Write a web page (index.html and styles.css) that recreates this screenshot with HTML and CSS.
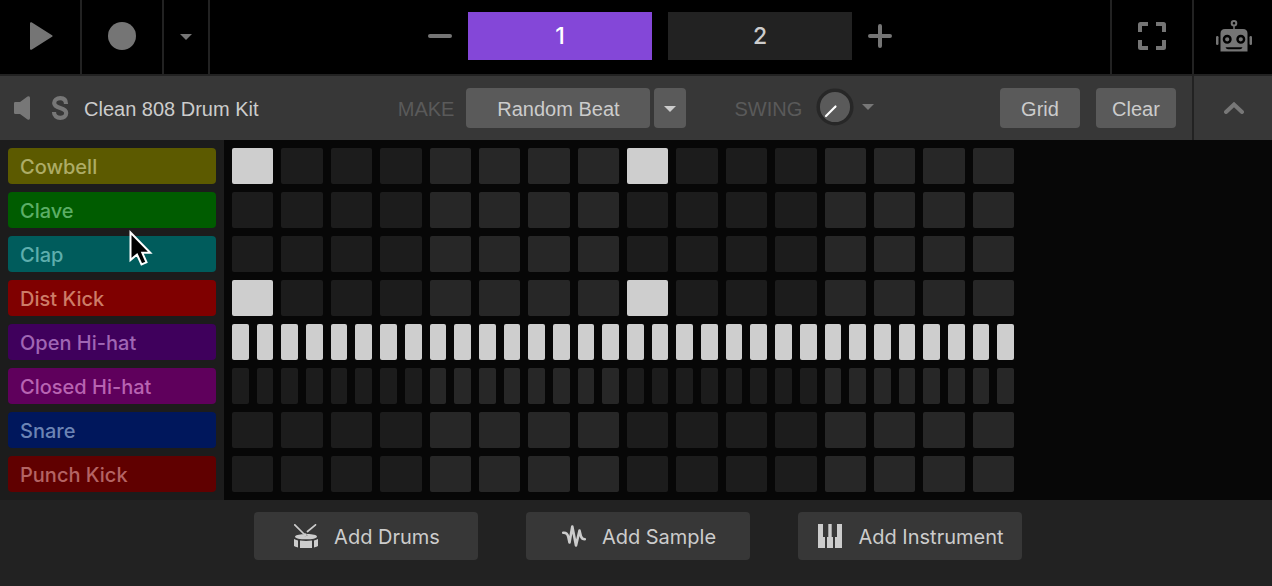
FILE: index.html
```html
<!DOCTYPE html>
<html lang="en">
<head>
<meta charset="utf-8">
<meta name="viewport" content="width=device-width, initial-scale=1">
<title>Beat sequencer</title>
<link rel="stylesheet" href="styles.css">
</head>
<body>
<div class="app">
  <header class="transport">
    <button class="cell" type="button" aria-label="Play">
      <svg width="28" height="28" viewBox="0 0 28 28"><path d="M5 1.200 25.500 14 5 26.800Z" fill="currentColor" stroke="currentColor" stroke-width="2" stroke-linejoin="round"/></svg>
    </button>
    <button class="cell" type="button" aria-label="Record">
      <svg width="28" height="28" viewBox="0 0 28 28"><circle cx="14" cy="14" r="14" fill="currentColor"/></svg>
    </button>
    <button class="cell cell-narrow" type="button" aria-label="Record options">
      <svg width="12" height="8" viewBox="0 0 12 8"><path d="M0 2h12L6 8Z" fill="currentColor"/></svg>
    </button>
    <nav class="patterns" aria-label="Patterns">
      <button class="icon-button" type="button" aria-label="Remove pattern">
        <svg width="24" height="24" viewBox="0 0 24 24"><path d="M2 12h20" stroke="currentColor" stroke-width="4" stroke-linecap="round"/></svg>
      </button>
      <button class="pattern pattern-active" type="button">1</button>
      <button class="pattern" type="button">2</button>
      <button class="icon-button" type="button" aria-label="Add pattern">
        <svg width="24" height="24" viewBox="0 0 24 24"><path d="M2 12h20M12 2v20" stroke="currentColor" stroke-width="4" stroke-linecap="round"/></svg>
      </button>
    </nav>
    <button class="cell cell-right" type="button" aria-label="Full screen">
      <svg width="28" height="28" viewBox="0 0 28 28"><path d="M2 10V2.500Q2 2 2.500 2H10M18 2h7.500q.5 0 .5.5V10M26 18v7.500q0 .5-.5.5H18M10 26H2.500Q2 26 2 25.500V18" fill="none" stroke="currentColor" stroke-width="4"/></svg>
    </button>
    <button class="cell cell-right" type="button" aria-label="Assistant">
      <svg width="36" height="32" viewBox="0 0 36 32">
        <circle cx="18" cy="3.300" r="2.300" fill="none" stroke="currentColor" stroke-width="2"/>
        <path d="M18 5.500V10" stroke="currentColor" stroke-width="1.500"/>
        <path fill="currentColor" fill-rule="evenodd" d="M9 9h18q4.500 0 4.500 4.500V31.500h-27V13.500Q4.500 9 9 9ZM9.500 27.200q.7 2.100 2.500 2.100h12q1.800 0 2.500-2.100Z"/>
        <rect x="0" y="16" width="2.500" height="9" rx="1.200" fill="currentColor"/>
        <rect x="33.500" y="16" width="2.500" height="9" rx="1.200" fill="currentColor"/>
        <g fill="none" stroke="#000" stroke-width="2.400"><circle cx="11.200" cy="19.300" r="3.300"/><circle cx="24.800" cy="19.300" r="3.300"/></g>
      </svg>
    </button>
  </header>

  <section class="toolbar" aria-label="Track controls">
    <div class="track-head">
      <button class="head-button" type="button" aria-label="Mute">
        <svg width="16" height="24" viewBox="0 0 16 24"><path d="M1.200 6H6L13.500.6Q16-.6 16 2v20q0 2.600-2.500 1.400L6 18H1.200Q0 18 0 16.800V7.200Q0 6 1.200 6Z" fill="currentColor"/></svg>
      </button>
      <button class="head-button" type="button" aria-label="Solo">
        <svg width="20" height="24" viewBox="0 0 20 24"><path d="M16 8C16 4 14 2.200 10.300 2.200S4.200 4.200 4.200 7c0 6.500 12 3.500 12 10 0 3-2.400 4.800-5.900 4.800S4 20 4 16" fill="none" stroke="currentColor" stroke-width="4.200"/></svg>
      </button>
      <span class="track-title">Clean 808 Drum Kit</span>
    </div>
    <div class="make">
      <span class="caption">MAKE</span>
      <button class="button make-button" type="button">Random Beat</button>
      <button class="button more-button" type="button" aria-label="More beats">
        <svg width="12" height="8" viewBox="0 0 12 8"><path d="M0 2h12L6 8Z" fill="currentColor"/></svg>
      </button>
      <label class="caption swing-label" for="swing">SWING</label>
      <span class="knob">
        <svg width="38" height="38" viewBox="0 0 38 38"><circle cx="19" cy="19" r="16.800" fill="#5a5a5a" stroke="#272727" stroke-width="3.500"/><path d="M19.500 18.500 10 28" stroke="#fff" stroke-width="2.200" stroke-linecap="round"/></svg>
        <input class="knob-input" id="swing" type="range" min="0" max="100" value="0">
      </span>
      <button class="head-button swing-more" type="button" aria-label="Swing options">
        <svg width="12" height="6" viewBox="0 0 12 6"><path d="M0 0h12L6 6Z" fill="currentColor"/></svg>
      </button>
    </div>
    <div class="actions">
      <button class="button action" type="button">Grid</button>
      <button class="button action" type="button">Clear</button>
      <button class="collapse" type="button" aria-label="Collapse track">
        <svg width="20" height="12" viewBox="0 0 20 12"><path d="M2 10 10 2.500 18 10" fill="none" stroke="currentColor" stroke-width="4" stroke-linecap="round"/></svg>
      </button>
    </div>
  </section>

  <main class="sequencer">
    <div class="instruments">
      <button class="instrument cowbell" type="button">Cowbell</button>
      <button class="instrument clave" type="button">Clave</button>
      <button class="instrument clap" type="button">Clap</button>
      <button class="instrument dist-kick" type="button">Dist Kick</button>
      <button class="instrument open-hat" type="button">Open Hi-hat</button>
      <button class="instrument closed-hat" type="button">Closed Hi-hat</button>
      <button class="instrument snare" type="button">Snare</button>
      <button class="instrument punch-kick" type="button">Punch Kick</button>
    </div>
    <div class="lanes" id="lanes"></div>
  </main>

  <footer class="add-bar">
    <button class="button add" type="button">
      <svg width="24" height="24" viewBox="0 0 24 24">
        <path d="M.8.800 11 11M21.500.800 13.500 7.500" stroke="currentColor" stroke-width="1.700" stroke-linecap="round"/>
        <circle cx="11.200" cy="11" r="1.700" fill="currentColor"/>
        <path d="M9.500 10.200 11 12.500 13.500 11.500 12.500 10.100C18 10 23 11 23 12.700S18 15.300 12 15.300 1 14.400 1 12.700 5 10.300 9.500 10.200Z" fill="currentColor"/>
        <path d="M0 15q1.500 1 4 1.400v7Q1 23 0 22ZM24 15q-1.500 1-4 1.400v7q3-.4 4-1.400ZM6 16.600q6 .8 12 0V24H6Z" fill="currentColor"/>
      </svg>
      <span class="add-text">Add Drums</span>
    </button>
    <button class="button add" type="button">
      <svg width="24" height="24" viewBox="0 0 24 24"><path d="M1.200 8.800C4 8.500 5.500 9.500 6.300 13l1.200 5.500L10.300 2.500 14 21.500 17.500 6.500 19 12.500q1 2.700 3.800 2.700" fill="none" stroke="currentColor" stroke-width="2.600" stroke-linecap="round" stroke-linejoin="round"/></svg>
      <span class="add-text">Add Sample</span>
    </button>
    <button class="button add" type="button">
      <svg width="24" height="24" viewBox="0 0 24 24"><path d="M0 0h5v13h2v11H0ZM10.300 0h3.400v13H15v11H9V13h1.300ZM19 0h5v24h-7V13h2Z" fill="currentColor"/></svg>
      <span class="add-text">Add Instrument</span>
    </button>
  </footer>

  <svg class="pointer" width="24" height="38" viewBox="0 0 24 38" aria-hidden="true"><path d="M1.500 2.500V30L8 24.500l4.500 10 5-2.200L13.300 22.800h8Z" fill="#000" stroke="#fff" stroke-width="2"/></svg>
</div>
<script src="script.js"></script>
</body>
</html>
```

FILE: styles.css
```css
* {
  box-sizing: border-box;
}

body {
  margin: 0;
  background: #222;
  color: #ccc;
  font-family: "Liberation Sans", Arial, sans-serif;
  font-size: 20px;
  line-height: 24px;
}

button {
  margin: 0;
  padding: 0;
  border: 0;
  background: none;
  color: inherit;
  font: inherit;
  cursor: pointer;
}

svg {
  display: block;
  flex: none;
}

.app {
  position: relative;
  display: flex;
  flex-direction: column;
  min-height: 100vh;
}

/* Transport bar */
.transport {
  display: flex;
  height: 76px;
  border-bottom: 2px solid #222;
  background: #000;
  color: #757575;
}

.cell {
  display: flex;
  align-items: center;
  justify-content: center;
  width: 82px;
  padding-bottom: 2px;
  border-right: 2px solid #222;
}

.cell-narrow {
  width: 46px;
}

.cell-right {
  border-right: 0;
  border-left: 2px solid #222;
}

.cell-right:last-child {
  width: 80px;
  padding-left: 2px;
}

.patterns {
  display: flex;
  flex: 1;
  align-items: center;
  justify-content: center;
  gap: 16px;
  padding-bottom: 2px;
}

.icon-button {
  display: flex;
}

.pattern {
  width: 184px;
  height: 48px;
  background: #222;
  color: #ccc;
  font-family: Inter, sans-serif;
  font-size: 23px;
  font-weight: 500;
}

.pattern-active {
  background: #8447d8;
  color: #fff;
}

/* Track toolbar */
.toolbar {
  display: grid;
  grid-template-columns: 1fr auto 1fr;
  height: 64px;
  background: #373737;
}

.track-head,
.make,
.actions {
  display: flex;
  align-items: center;
}

.track-head {
  gap: 20px;
  padding-left: 14px;
}

.head-button {
  display: flex;
  color: #777;
}

.track-title {
  margin-left: -6px;
  padding-top: 2px;
  white-space: nowrap;
}

.caption {
  margin-right: 12px;
  padding-top: 2px;
  color: #5a5a5a;
}

.button {
  border-radius: 4px;
  background: #5a5a5a;
  color: #ccc;
}

.make-button {
  width: 184px;
  height: 40px;
  margin-right: 4px;
  padding-top: 2px;
}

.more-button {
  display: flex;
  align-items: center;
  justify-content: center;
  width: 32px;
  height: 40px;
  margin-right: 48px;
}

.swing-label {
  margin-right: 14px;
}

.knob {
  position: relative;
  padding-bottom: 2px;
}

.knob-input {
  position: absolute;
  inset: 0;
  width: 100%;
  height: 100%;
  margin: 0;
  opacity: 0;
}

.swing-more {
  margin-left: 8px;
  padding-bottom: 2px;
}

.actions {
  justify-content: flex-end;
  gap: 16px;
}

.action {
  width: 80px;
  height: 40px;
  padding-top: 2px;
}

.collapse {
  display: flex;
  align-items: center;
  align-self: stretch;
  justify-content: center;
  width: 80px;
  padding-left: 2px;
  border-left: 2px solid #222;
  color: #777;
}

/* Step sequencer */
.sequencer {
  display: flex;
  background: #070707;
}

.instruments,
.lanes {
  display: grid;
  grid-auto-rows: 36px;
  gap: 8px;
  padding: 8px;
}

.instruments {
  width: 224px;
  background: #1c1c1c;
}

.lanes {
  flex: 1;
  padding-right: 258px;
}

.lane {
  display: grid;
  grid-template-columns: repeat(16, 1fr);
  gap: 8px;
}

.lane-double {
  grid-template-columns: repeat(32, 1fr);
}

.step {
  border-radius: 2px;
  background: #1c1c1c;
}

.step-alt {
  background: #272727;
}

.step-on {
  background: #cecece;
}

.instrument {
  padding: 2px 12px 0;
  border-radius: 4px;
  font-family: Inter, sans-serif;
  font-weight: 500;
  text-align: left;
}

.cowbell { background: #5c5a00; color: #adac66; }
.clave { background: #005c00; color: #5cae66; }
.clap { background: #005c5c; color: #5eaead; }
.dist-kick { background: #7f0000; color: #cd7c68; }
.open-hat { background: #3f005c; color: #a066b4; }
.closed-hat { background: #5f005c; color: #b864b2; }
.snare { background: #00175c; color: #6c84b4; }
.punch-kick { background: #600000; color: #b46464; }

/* Add track bar */
.add-bar {
  display: flex;
  flex: 1;
  align-items: flex-start;
  justify-content: center;
  gap: 48px;
  padding: 12px 0 26px 4px;
  background: #222;
}

.add {
  display: flex;
  align-items: center;
  justify-content: center;
  gap: 16px;
  width: 224px;
  height: 48px;
  padding-left: 2px;
  background: #373737;
  font-family: Inter, sans-serif;
}

.add-text {
  padding-top: 2px;
}

.pointer {
  position: absolute;
  top: 230px;
  left: 129px;
  pointer-events: none;
}
```

FILE: script.js
```javascript
const lanes = [
  { name: "Cowbell", steps: 16, on: [0, 8] },
  { name: "Clave", steps: 16, on: [] },
  { name: "Clap", steps: 16, on: [] },
  { name: "Dist Kick", steps: 16, on: [0, 8] },
  { name: "Open Hi-hat", steps: 32, on: [...Array(32).keys()] },
  { name: "Closed Hi-hat", steps: 32, on: [] },
  { name: "Snare", steps: 16, on: [] },
  { name: "Punch Kick", steps: 16, on: [] }
];

const root = document.getElementById("lanes");

lanes.forEach((lane) => {
  const row = document.createElement("div");
  row.className = lane.steps === 32 ? "lane lane-double" : "lane";
  for (let i = 0; i < lane.steps; i++) {
    const step = document.createElement("button");
    const on = lane.on.includes(i);
    step.type = "button";
    step.className = "step";
    step.classList.toggle("step-alt", Math.floor(i / (lane.steps / 4)) % 2 === 1);
    step.classList.toggle("step-on", on);
    step.setAttribute("aria-label", `${lane.name} step ${i + 1}`);
    step.setAttribute("aria-pressed", on);
    step.addEventListener("click", () => {
      step.setAttribute("aria-pressed", step.classList.toggle("step-on"));
    });
    row.append(step);
  }
  root.append(row);
});
```
